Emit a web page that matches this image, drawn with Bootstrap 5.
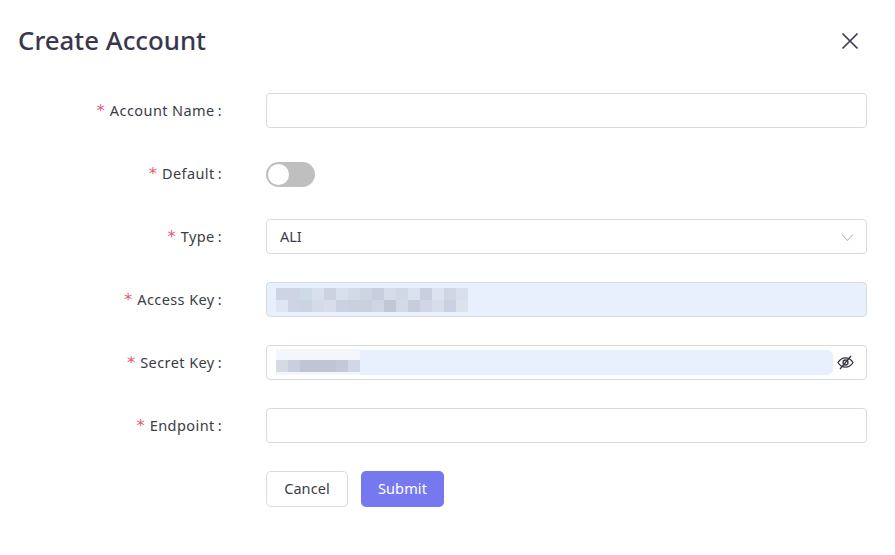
<!DOCTYPE html>
<html lang="en">
<head>
<meta charset="utf-8">
<title>Create Account</title>
<link href="https://cdn.jsdelivr.net/npm/bootstrap@5.3.0/dist/css/bootstrap.min.css" rel="stylesheet">
<style>
html,body{height:100%;background:#fff;overflow:hidden}
body{font-family:"Noto Sans","Open Sans",sans-serif;color:#3b3a4d;font-size:14.5px}
.dlg{padding:20px 28px 0 18px;width:895px}
.dlg-title{font-size:25.8px;font-weight:500;line-height:40px;margin:0;color:#3a374d}
.dlg-head{height:73px}
.dlg-close{width:18px;height:18px;margin:9px 8px 0 0;display:block;background:none;border:0;padding:0}
.frow{height:35px;margin-bottom:28px}
.flabel{width:204px;margin:0 44px 0 0;padding:2px 0 0;text-align:right;color:#3c3c46;font-size:14.5px;white-space:nowrap;letter-spacing:.42px}
.req{color:#e4596a;margin-right:5px;font-family:"DejaVu Sans",sans-serif;font-size:16.500px;letter-spacing:0}
.colon{margin-left:3px}
.finput{flex:1;height:35px;border:1px solid #d9d9de;border-radius:4px;background:#fff;padding:1px 13px 0;position:relative;color:#3c3c46;display:flex;align-items:center}
.tog{width:49px;height:25px;border-radius:13px;background:#bfbfbf;position:relative;margin-top:2px}
.tog::after{content:"";position:absolute;left:2px;top:2px;width:21px;height:21px;border-radius:50%;background:#fff}
.filled{background:#e8f0fd;border-color:#d6dae2}
.auto-fill{position:absolute;left:9px;right:33px;top:4px;height:25px;background:#e8f0fd;border-radius:6px}
.mosaic{position:absolute;display:block}
.mos-a{left:9px;top:5px}
.mos-b{left:9px;top:3px}
.chev{margin-left:auto;margin-right:-1px}
.eye{position:absolute;right:12px;top:9px}
.btn-row{padding-left:248px;gap:13px;display:flex}
.btn-cancel{width:82px;height:36px;padding:0;border:1px solid #dcdce0;border-radius:5px;background:#fff;color:#3c3c46;font-size:14.5px;letter-spacing:.1px}
.btn-submit{width:83px;height:36px;padding:0;border:0;border-radius:5px;background:#7678f0;color:#fff;font-size:14.5px;letter-spacing:.1px}
</style>
</head>
<body>
<div class="dlg">
  <div class="d-flex justify-content-between align-items-start dlg-head">
    <h1 class="dlg-title">Create Account</h1>
    <button type="button" class="dlg-close" aria-label="Close">
      <svg width="18" height="18" viewBox="0 0 18 18"><path d="M1.500 1.500 16.500 16.500M16.500 1.500 1.500 16.500" stroke="#3f3c52" stroke-width="1.7" fill="none"/></svg>
    </button>
  </div>
  <form>
    <div class="d-flex align-items-center frow">
      <label class="flabel"><span class="req">*</span>Account Name<span class="colon">:</span></label>
      <div class="finput"></div>
    </div>
    <div class="d-flex align-items-center frow">
      <label class="flabel"><span class="req">*</span>Default<span class="colon">:</span></label>
      <div class="tog"></div>
    </div>
    <div class="d-flex align-items-center frow">
      <label class="flabel"><span class="req">*</span>Type<span class="colon">:</span></label>
      <div class="finput">ALI
        <svg class="chev" width="13" height="9" viewBox="0 0 13 9"><path d="M1 1.500 6.500 7.500 12 1.500" stroke="#b9bbc4" stroke-width="1.100" fill="none"/></svg>
      </div>
    </div>
    <div class="d-flex align-items-center frow">
      <label class="flabel"><span class="req">*</span>Access Key<span class="colon">:</span></label>
      <div class="finput filled">
        <svg class="mosaic mos-a" width="192" height="24" viewBox="0 0 16 2" shape-rendering="crispEdges">
          <g>
            <rect x="0" y="0" width="2" height="1" fill="#cdd5e5"/><rect x="2" y="0" width="1" height="1" fill="#cfdae8"/><rect x="3" y="0" width="1" height="1" fill="#d8dfec"/><rect x="4" y="0" width="1" height="1" fill="#cdd2e2"/><rect x="5" y="0" width="1" height="1" fill="#d7deec"/><rect x="6" y="0" width="1" height="1" fill="#d3d9e6"/><rect x="7" y="0" width="1" height="1" fill="#cdd4e2"/><rect x="8" y="0" width="1" height="1" fill="#c8cedd"/><rect x="9" y="0" width="1" height="1" fill="#d6dde9"/><rect x="10" y="0" width="1" height="1" fill="#d0d8e6"/><rect x="11" y="0" width="1" height="1" fill="#dbe1ee"/><rect x="12" y="0" width="1" height="1" fill="#c9cfdf"/><rect x="13" y="0" width="1" height="1" fill="#dce3ef"/><rect x="14" y="0" width="1" height="1" fill="#d0d7e3"/><rect x="15" y="0" width="1" height="1" fill="#d9dfea"/>
            <rect x="0" y="1" width="1" height="1" fill="#dfe6f3"/><rect x="1" y="1" width="1" height="1" fill="#cdd4e3"/><rect x="2" y="1" width="1" height="1" fill="#ccd3e1"/><rect x="3" y="1" width="1" height="1" fill="#d4dbe8"/><rect x="4" y="1" width="1" height="1" fill="#d8dde9"/><rect x="5" y="1" width="1" height="1" fill="#cbd1e1"/><rect x="6" y="1" width="2" height="1" fill="#c9d0de"/><rect x="8" y="1" width="1" height="1" fill="#cfd5e2"/><rect x="9" y="1" width="1" height="1" fill="#c0c8d5"/><rect x="10" y="1" width="1" height="1" fill="#d3dae7"/><rect x="11" y="1" width="1" height="1" fill="#c7cddc"/><rect x="12" y="1" width="1" height="1" fill="#d0d6e6"/><rect x="13" y="1" width="1" height="1" fill="#d7dde9"/><rect x="14" y="1" width="1" height="1" fill="#c9d3df"/><rect x="15" y="1" width="1" height="1" fill="#dbe2e9"/>
          </g>
        </svg>
      </div>
    </div>
    <div class="d-flex align-items-center frow">
      <label class="flabel"><span class="req">*</span>Secret Key<span class="colon">:</span></label>
      <div class="finput">
        <span class="auto-fill"></span>
        <svg class="mosaic mos-b" width="84" height="26" viewBox="0 0 84 26" shape-rendering="crispEdges">
          <rect width="84" height="26" fill="#f3f6fd"/>
          <rect x="0" y="11" width="12" height="12" fill="#d6dae2"/><rect x="12" y="11" width="12" height="12" fill="#c7d0dc"/><rect x="24" y="11" width="36" height="12" fill="#bfc5d2"/><rect x="60" y="11" width="12" height="12" fill="#c5c9d6"/><rect x="72" y="11" width="12" height="12" fill="#d0d8e8"/>
        </svg>
        <svg class="eye" width="17" height="15" viewBox="0 0 17 15" fill="none" stroke="#33323f" stroke-width="1.300"><path d="M1 7.500C3 4.300 5.500 2.800 8.500 2.800s5.500 1.500 7.500 4.700C14 10.700 11.500 12.200 8.500 12.200S3 10.700 1 7.500Z"/><circle cx="8.500" cy="7.500" r="2.500"/><path d="M14 1 3 14"/></svg>
      </div>
    </div>
    <div class="d-flex align-items-center frow">
      <label class="flabel"><span class="req">*</span>Endpoint<span class="colon">:</span></label>
      <div class="finput"></div>
    </div>
    <div class="btn-row">
      <button type="button" class="btn btn-cancel">Cancel</button>
      <button type="button" class="btn btn-submit">Submit</button>
    </div>
  </form>
</div>
<script src="https://cdn.jsdelivr.net/npm/bootstrap@5.3.0/dist/js/bootstrap.bundle.min.js"></script>
</body>
</html>
